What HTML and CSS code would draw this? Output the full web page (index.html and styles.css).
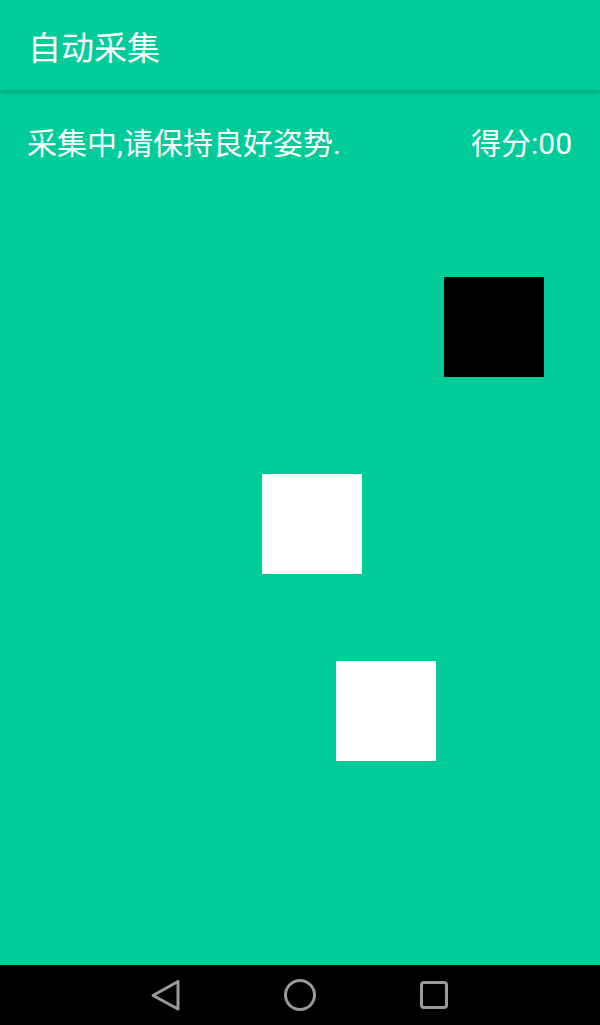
FILE: index.html
```html
<!DOCTYPE html>
<html lang="zh-CN">
<head>
<meta charset="utf-8">
<title>自动采集</title>
<link rel="stylesheet" href="styles.css">
</head>
<body>
<div class="app">
  <header class="appbar"><h1 class="title">自动采集</h1></header>
  <main class="content">
    <div class="status">
      <span class="status-text">采集中,请保持良好姿势.</span>
      <span class="score">得分:00</span>
    </div>
    <div class="block black" style="left:444px; top:187px;"></div>
    <div class="block white" style="left:262px; top:384px;"></div>
    <div class="block white" style="left:336px; top:571px;"></div>
  </main>
  <nav class="navbar">
    <svg class="nav-icon" viewBox="0 0 40 40" width="40" height="40">
      <path d="M7 15.5 L32 1.5 L32 29 Z" transform="translate(0,5)" fill="none" stroke="#9a9a9a" stroke-width="3" stroke-linejoin="round"/>
    </svg>
    <svg class="nav-icon" viewBox="0 0 40 40" width="40" height="40">
      <circle cx="20" cy="20" r="14.5" fill="none" stroke="#9a9a9a" stroke-width="3"/>
    </svg>
    <svg class="nav-icon" viewBox="0 0 40 40" width="40" height="40">
      <rect x="7.5" y="7.5" width="25" height="25" rx="2.5" fill="none" stroke="#9a9a9a" stroke-width="3"/>
    </svg>
  </nav>
</div>
</body>
</html>
```

FILE: styles.css
```css
* { box-sizing: border-box; }
html, body { margin: 0; padding: 0; }
body {
  width: 600px;
  height: 1025px;
  overflow: hidden;
  background: #00cc99;
  font-family: Roboto, "Noto Sans CJK SC", sans-serif;
  color: #ffffff;
}
.app {
  display: flex;
  flex-direction: column;
  height: 1025px;
}
.appbar {
  height: 90px;
  flex: 0 0 90px;
  display: flex;
  align-items: center;
  padding: 8px 0 0 28px;
  background: #00cc99;
  box-shadow: 0 2px 5px rgba(0, 0, 0, 0.22);
  position: relative;
  z-index: 2;
}
.title {
  margin: 0;
  font-size: 33px;
  font-weight: 400;
  line-height: 40px;
}
.content {
  flex: 1 1 auto;
  position: relative;
}
.status {
  display: flex;
  justify-content: space-between;
  align-items: center;
  padding: 34px 28px 0 27px;
  font-size: 30px;
  line-height: 40px;
}
.block {
  position: absolute;
  width: 100px;
  height: 100px;
}
.black { background: #000000; }
.white { background: #ffffff; }
.navbar {
  flex: 0 0 60px;
  height: 60px;
  background: #000000;
  display: flex;
  align-items: center;
  justify-content: center;
  gap: 94px;
  padding-left: 0;
}
.nav-icon { display: block; }
```
